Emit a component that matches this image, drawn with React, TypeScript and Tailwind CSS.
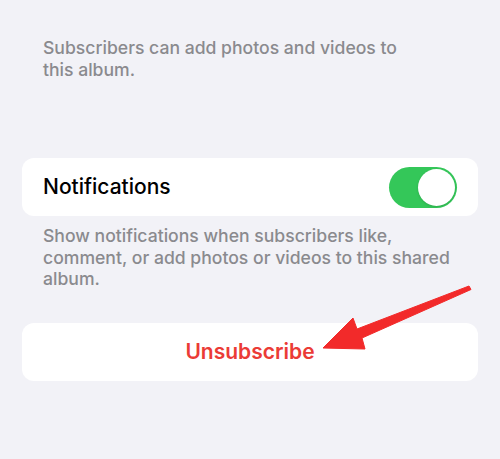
import { FC } from 'react';

const Toggle: FC<{ on: boolean }> = ({ on }) => (
  <div
    className={
      'flex h-[41px] w-[68px] items-center rounded-full p-[2px] ' +
      (on ? 'justify-end bg-[#34c759]' : 'justify-start bg-[#e9e9eb]')
    }
  >
    <div className="h-[37px] w-[37px] rounded-full bg-white shadow-sm" />
  </div>
);

// red annotation arrow drawn over the button
const Arrow: FC = () => (
  <svg
    className="pointer-events-none absolute left-0 top-0"
    width="500"
    height="459"
    viewBox="0 0 500 459"
  >
    <path
      d="M469 286 L471 289.5 L362 338 L365 349 L323 348 L353 318 L357 329 Z"
      fill="#f22a2a"
      stroke="#f22a2a"
      strokeLinejoin="round"
      strokeWidth="1"
    />
  </svg>
);

export default function App() {
  return (
    <div
      className="relative flex h-[459px] w-[500px] flex-col overflow-hidden bg-[#f2f2f7]"
      style={{ fontFamily: 'Inter, "Noto Sans", sans-serif' }}
    >
      <p className="mt-[37px] pl-[43px] pr-[90px] text-[17.6px] font-medium leading-[22px] text-[#8a8a8e]">
        Subscribers can add photos and videos to this album.
      </p>

      <div className="mx-[22px] mt-[77px] flex h-[58px] items-center justify-between rounded-[12px] bg-white pl-[21px] pr-[21px]">
        <span className="text-[21px] font-medium text-black">Notifications</span>
        <Toggle on />
      </div>

      <p className="mt-[9px] pl-[43px] pr-[34px] text-[17.6px] font-medium leading-[21.5px] text-[#8a8a8e]">
        Show notifications when subscribers like, comment, or add photos or videos to this shared album.
      </p>

      <div className="mx-[22px] mt-[33px] flex h-[58px] items-center justify-center rounded-[12px] bg-white">
        <span className="text-[21px] font-semibold text-[#eb3b36]">Unsubscribe</span>
      </div>

      <Arrow />
    </div>
  );
}
